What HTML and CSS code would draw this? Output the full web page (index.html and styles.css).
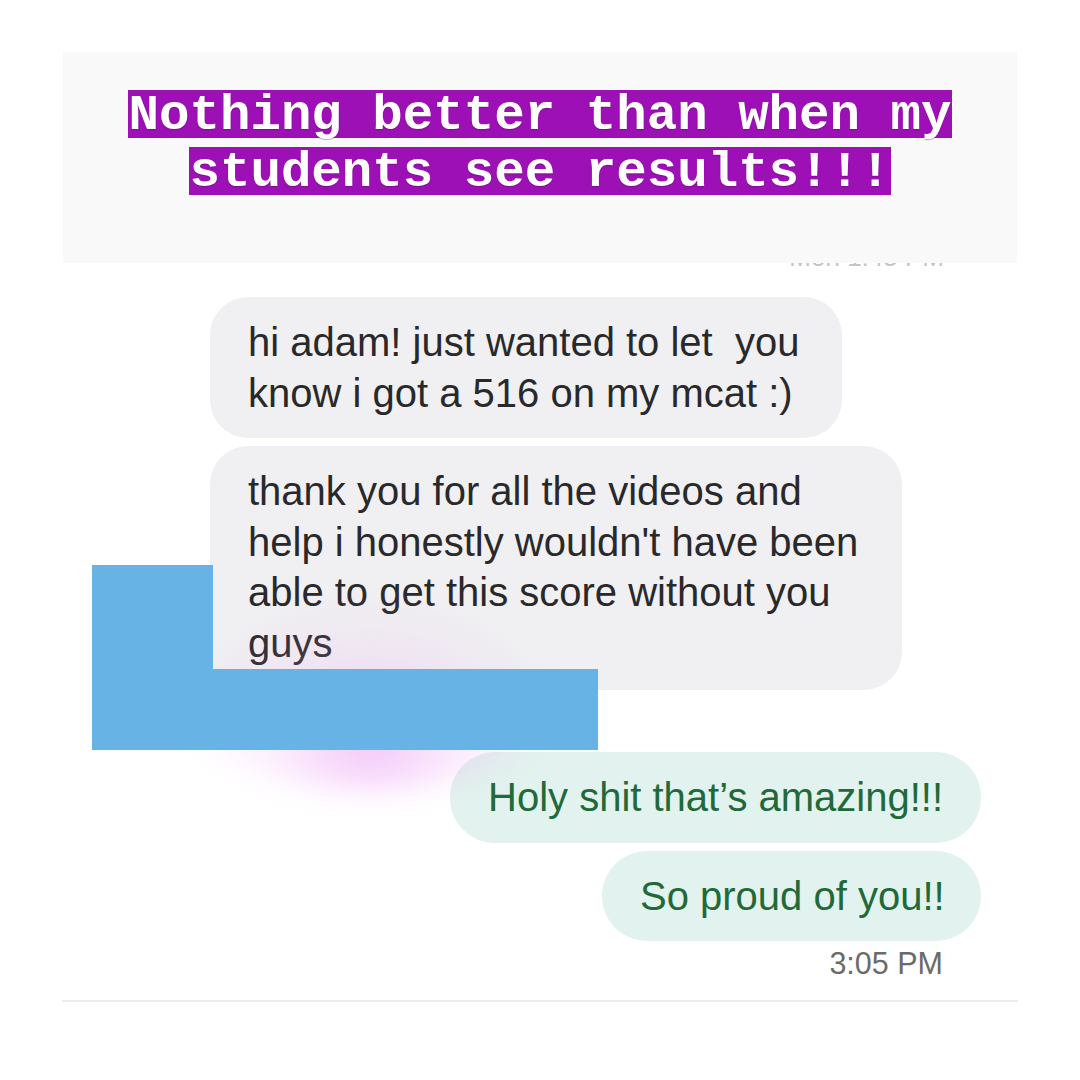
FILE: index.html
```html
<!DOCTYPE html>
<html>
<head>
<meta charset="utf-8">
<link rel="stylesheet" href="styles.css">
</head>
<body>
<div class="page">
  <div class="panel">
    <div class="title-line"><span class="hl">Nothing better than when my</span></div>
    <div class="title-line"><span class="hl">students see results!!!</span></div>
  </div>
  <div class="cut-stamp"><span>Mon 1:45 PM</span></div>
  <div class="chat">
    <div class="bubble in b1">hi adam! just wanted to let&nbsp; you<br>know i got a 516 on my mcat :)</div>
    <div class="bubble in b2">thank you for all the videos and<br>help i honestly wouldn't have been<br>able to get this score without you<br>guys</div>
    <div class="bubble out b3">Holy shit that’s amazing!!!</div>
    <div class="bubble out b4">So proud of you!!</div>
    <div class="stamp">3:05 PM</div>
  </div>
  <div class="rule"></div>
  <div class="glow"></div>
  <div class="redact redact-a"></div>
  <div class="redact redact-b"></div>
</div>
</body>
</html>
```
FILE: styles.css
```css
html, body {
  margin: 0;
  padding: 0;
  background: #ffffff;
}
.page {
  position: relative;
  width: 1080px;
  height: 1080px;
  display: flex;
  flex-direction: column;
  font-family: "Liberation Sans", Arial, sans-serif;
  overflow: hidden;
}
.panel {
  position: relative;
  z-index: 2;
  margin: 52px 0 0 63px;
  width: 954px;
  height: 211px;
  box-sizing: border-box;
  padding-top: 38px;
  background: #f9f9f9;
  display: flex;
  flex-direction: column;
  align-items: center;
  gap: 9px;
}
.title-line {
  height: 48px;
  display: flex;
  justify-content: center;
}
.hl {
  display: inline-block;
  height: 48px;
  line-height: 52px;
  background: #9c10b5;
  color: #ffffff;
  font-family: "Liberation Mono", "Courier New", monospace;
  font-weight: bold;
  font-size: 50.8px;
  white-space: pre;
  text-shadow: 0 1px 1px rgba(80, 0, 90, 0.35);
}
.cut-stamp {
  position: relative;
  z-index: 1;
  height: 5px;
  overflow: hidden;
  display: flex;
  justify-content: flex-end;
  align-items: flex-end;
  padding-right: 136px;
}
.cut-stamp span {
  font-size: 26px;
  line-height: 22px;
  color: #c4c4c4;
  white-space: nowrap;
}
.chat {
  position: relative;
  z-index: 1;
  margin-top: 29px;
  padding: 0 99px 0 210px;
  display: flex;
  flex-direction: column;
  gap: 8px;
}
.bubble {
  box-sizing: border-box;
  font-size: 40px;
  line-height: 50.5px;
  border-radius: 38px;
  white-space: nowrap;
}
.in {
  align-self: flex-start;
  background: #f0f0f2;
  color: #29292b;
  padding: 20px 38px 20px 38px;
}
.b1 { width: 632px; }
.b2 { width: 692px; padding-bottom: 22px; }
.out {
  align-self: flex-end;
  background: #e2f2ee;
  color: #22693a;
  padding: 20px 40px 20px 38px;
  text-align: right;
  border-radius: 45px;
}
.b2 + .b3 { margin-top: 54px; }
.b3 { width: 531px; }
.b4 { width: 379px; }
.stamp {
  align-self: flex-end;
  margin-right: 38px;
  margin-top: -4px;
  font-size: 30.5px;
  line-height: 36px;
  color: #6b6b6b;
}
.rule {
  margin: 19px 0 0 62px;
  width: 956px;
  height: 2px;
  background: #ececec;
}
.glow {
  position: absolute;
  z-index: 3;
  left: 170px;
  top: 590px;
  width: 400px;
  height: 200px;
  border-radius: 50%;
  background: radial-gradient(ellipse at 50% 78%, rgba(228, 120, 240, 0.4) 0%, rgba(238, 165, 246, 0.18) 35%, rgba(255, 255, 255, 0) 70%);
  filter: blur(14px);
}
.redact {
  position: absolute;
  z-index: 4;
  background: #67b3e6;
}
.redact-a {
  left: 92px;
  top: 565px;
  width: 121px;
  height: 185px;
}
.redact-b {
  left: 92px;
  top: 669px;
  width: 506px;
  height: 81px;
}
```
